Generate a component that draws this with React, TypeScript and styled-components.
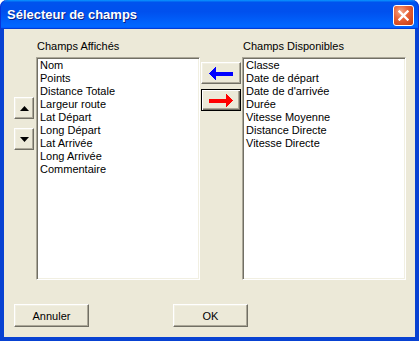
import React from 'react'
import styled, { createGlobalStyle } from 'styled-components'

const GlobalStyle = createGlobalStyle`
  html, body {
    margin: 0;
    padding: 0;
    background: #ffffff;
  }
  body {
    font-family: "Liberation Sans", Arial, sans-serif;
    font-size: 11px;
    color: #000000;
  }
`

const shown = [
  'Nom',
  'Points',
  'Distance Totale',
  'Largeur route',
  'Lat Départ',
  'Long Départ',
  'Lat Arrivée',
  'Long Arrivée',
  'Commentaire',
]

const available = [
  'Classe',
  'Date de départ',
  "Date de d'arrivée",
  'Durée',
  'Vitesse Moyenne',
  'Distance Directe',
  'Vitesse Directe',
]

const Window = styled.div`
  width: 419px;
  height: 341px;
  display: flex;
  flex-direction: column;
`

const TitleBar = styled.div`
  height: 29px;
  flex: none;
  display: flex;
  align-items: flex-start;
  justify-content: space-between;
  border-radius: 7px 7px 0 0;
  background: linear-gradient(
    180deg,
    #0997ff 0%,
    #0053ee 8%,
    #0050ee 40%,
    #0066ff 88%,
    #0066ff 93%,
    #005bff 95%,
    #003dd7 96%,
    #003dd7 100%
  );
  box-shadow: inset 1px 0 #0831d9, inset -1px 0 #0831d9;
`

const Title = styled.div`
  padding: 7px 0 0 7px;
  font-family: "Liberation Sans", Arial, sans-serif;
  font-weight: bold;
  font-size: 13px;
  line-height: 16px;
  color: #ffffff;
  text-shadow: 1px 1px #0a1e80;
`

const CloseButton = styled.div`
  width: 21px;
  height: 21px;
  margin: 5px 5px 0 0;
  box-sizing: border-box;
  border: 1px solid #ffffff;
  border-radius: 3px;
  background: radial-gradient(circle at 35% 30%, #f4a888 0%, #e8643a 40%, #d44a20 75%, #c03a12 100%);
  display: flex;
  align-items: center;
  justify-content: center;
`

const Client = styled.div`
  flex: 1;
  background: #ece9d8;
  border-style: solid;
  border-color: #0842d2;
  border-width: 0 4px 4px 4px;
  padding: 11px 0 0 10px;
`

const Main = styled.div`
  display: flex;
  align-items: flex-start;
`

const ReorderColumn = styled.div`
  width: 20px;
  margin-right: 2px;
  padding-top: 57px;
  display: flex;
  flex-direction: column;
  gap: 9px;
`

const MoveColumn = styled.div`
  width: 40px;
  margin: 0 1px;
  padding-top: 22px;
  display: flex;
  flex-direction: column;
  gap: 5px;
`

const ListColumn = styled.div`
  width: 164px;
  display: flex;
  flex-direction: column;
`

const Label = styled.div`
  height: 13px;
  line-height: 13px;
  padding-left: 1px;
  margin-bottom: 4px;
  white-space: nowrap;
`

const ListBox = styled.div`
  height: 223px;
  box-sizing: border-box;
  background: #ffffff;
  border: 1px solid;
  border-color: #aca899 #ffffff #ffffff #aca899;
  box-shadow: inset 1px 1px #716f64, inset -1px -1px #f1efe2;
  padding: 1px 3px;
`

const ListItem = styled.div`
  height: 13px;
  line-height: 13px;
  white-space: nowrap;
`

const Button = styled.button<{ $w: number; $h: number; $default?: boolean }>`
  width: ${(p) => p.$w}px;
  height: ${(p) => p.$h}px;
  box-sizing: border-box;
  margin: 0;
  padding: 0;
  background: #ece9d8;
  font-family: "Liberation Sans", Arial, sans-serif;
  font-size: 11px;
  color: #000000;
  display: flex;
  align-items: center;
  justify-content: center;
  border: 1px solid;
  border-color: ${(p) => (p.$default ? '#000000' : '#ffffff #716f64 #716f64 #ffffff')};
  box-shadow: ${(p) =>
    p.$default
      ? 'inset 1px 1px #ffffff, inset -1px -1px #716f64, inset -2px -2px #aca899'
      : 'inset -1px -1px #aca899, inset 1px 1px #f1efe2'};
  outline: none;
`

const Footer = styled.div`
  margin-top: 24px;
  display: flex;
  gap: 84px;
`

const Arrow = ({ dir, color }: { dir: 'left' | 'right'; color: string }) => (
  <svg width="24" height="13" viewBox="0 0 24 13" shapeRendering="crispEdges">
    <polygon
      fill={color}
      points="0,6.5 7,0 7,4.5 24,4.5 24,8.5 7,8.5 7,13"
      transform={dir === 'right' ? 'translate(24 0) scale(-1 1)' : undefined}
    />
  </svg>
)

const Triangle = ({ dir }: { dir: 'up' | 'down' }) => (
  <svg width="9" height="5" viewBox="0 0 9 5">
    <polygon fill="#000000" points={dir === 'up' ? '0,5 4.5,0 9,5' : '0,0 9,0 4.5,5'} />
  </svg>
)

const CloseIcon = () => (
  <svg width="11" height="11" viewBox="0 0 11 11">
    <path d="M1.5 1.5 L9.5 9.5 M9.5 1.5 L1.5 9.5" stroke="#ffffff" strokeWidth="2.4" strokeLinecap="square" />
  </svg>
)

export default function App() {
  return (
    <>
      <GlobalStyle />
      <Window>
        <TitleBar>
          <Title>Sélecteur de champs</Title>
          <CloseButton>
            <CloseIcon />
          </CloseButton>
        </TitleBar>
        <Client>
          <Main>
            <ReorderColumn>
              <Button $w={20} $h={22}>
                <Triangle dir="up" />
              </Button>
              <Button $w={20} $h={22}>
                <Triangle dir="down" />
              </Button>
            </ReorderColumn>
            <ListColumn>
              <Label>Champs Affichés</Label>
              <ListBox>
                {shown.map((s) => (
                  <ListItem key={s}>{s}</ListItem>
                ))}
              </ListBox>
            </ListColumn>
            <MoveColumn>
              <Button $w={40} $h={22}>
                <Arrow dir="left" color="#0000ff" />
              </Button>
              <Button $w={40} $h={22} $default>
                <Arrow dir="right" color="#ff0000" />
              </Button>
            </MoveColumn>
            <ListColumn>
              <Label>Champs Disponibles</Label>
              <ListBox>
                {available.map((s) => (
                  <ListItem key={s}>{s}</ListItem>
                ))}
              </ListBox>
            </ListColumn>
          </Main>
          <Footer>
            <Button $w={75} $h={23}>Annuler</Button>
            <Button $w={75} $h={23}>OK</Button>
          </Footer>
        </Client>
      </Window>
    </>
  )
}
